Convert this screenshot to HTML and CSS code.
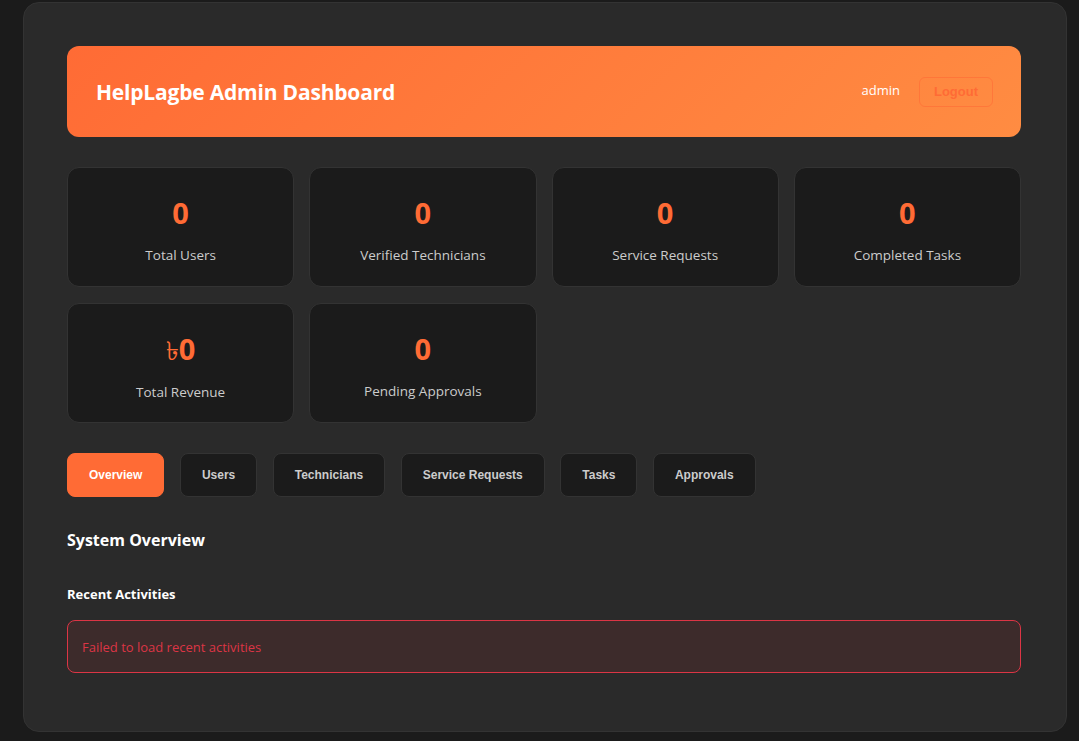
FILE: index.html
```html
<!DOCTYPE html>
<html lang="en">
<head>
<meta charset="utf-8">
<title>HelpLagbe Admin Dashboard</title>
<link rel="stylesheet" href="styles.css">
</head>
<body>
<div class="container">
  <header class="header">
    <h1 class="title">HelpLagbe Admin Dashboard</h1>
    <div class="user-area">
      <span class="user-name">admin</span>
      <button class="logout">Logout</button>
    </div>
  </header>

  <section class="stats">
    <div class="stat-card"><div class="stat-num">0</div><div class="stat-label">Total Users</div></div>
    <div class="stat-card"><div class="stat-num">0</div><div class="stat-label">Verified Technicians</div></div>
    <div class="stat-card"><div class="stat-num">0</div><div class="stat-label">Service Requests</div></div>
    <div class="stat-card"><div class="stat-num">0</div><div class="stat-label">Completed Tasks</div></div>
    <div class="stat-card"><div class="stat-num"><span class="taka">৳</span>0</div><div class="stat-label">Total Revenue</div></div>
    <div class="stat-card"><div class="stat-num">0</div><div class="stat-label">Pending Approvals</div></div>
  </section>

  <nav class="tabs">
    <button class="tab active">Overview</button>
    <button class="tab">Users</button>
    <button class="tab">Technicians</button>
    <button class="tab">Service Requests</button>
    <button class="tab">Tasks</button>
    <button class="tab">Approvals</button>
  </nav>

  <section class="overview">
    <h2 class="section-title">System Overview</h2>
    <h3 class="sub-title">Recent Activities</h3>
    <div class="error-box">Failed to load recent activities</div>
  </section>
</div>
</body>
</html>
```

FILE: styles.css
```css
html, body {
  margin: 0;
  background: #1b1b1b;
}
body {
  padding: 2px 12px 10px 23px;
  font-family: "Open Sans", "Noto Sans", sans-serif;
  color: #ffffff;
}
.container {
  box-sizing: border-box;
  width: 1044px;
  background: #2a2a2a;
  border: 1px solid #333333;
  border-radius: 16px;
  padding: 43px 45px 58px 43px;
}
.header {
  height: 91px;
  box-sizing: border-box;
  border-radius: 12px;
  background: linear-gradient(135deg, #ff6b35 0%, #ff8c42 100%);
  display: flex;
  align-items: center;
  justify-content: space-between;
  padding: 0 28px 0 29px;
}
.title {
  margin: 0;
  font-size: 21px;
  font-weight: 700;
  letter-spacing: -0.2px;
  color: #ffffff;
}
.user-area {
  display: flex;
  align-items: center;
  gap: 19px;
}
.user-name {
  font-size: 13px;
  color: #ffffff;
  position: relative;
  top: -2px;
}
.logout {
  height: 30px;
  width: 74px;
  box-sizing: border-box;
  background: transparent;
  border: 1px solid rgba(255, 107, 53, 0.6);
  border-radius: 6px;
  color: #ff6b35;
  font-family: "Liberation Sans", Arial, sans-serif;
  font-weight: 700;
  font-size: 13px;
  padding: 0;
}
.stats {
  margin-top: 30px;
  display: grid;
  grid-template-columns: repeat(4, 1fr);
  gap: 16px 15px;
}
.stat-card {
  height: 120px;
  box-sizing: border-box;
  background: #1b1b1b;
  border: 1px solid #333333;
  border-radius: 12px;
  display: flex;
  flex-direction: column;
  align-items: center;
  padding-top: 27px;
}
.stat-num {
  font-size: 29px;
  font-weight: 700;
  color: #ff6b35;
  line-height: 36px;
}
.taka {
  font-weight: 400;
  font-size: 26px;
}
.stat-label {
  margin-top: 15px;
  font-size: 13.5px;
  color: #cccccc;
}
.tabs {
  margin-top: 30px;
  display: flex;
  gap: 15.5px;
}
.tab {
  height: 44px;
  box-sizing: border-box;
  padding: 0 21px;
  background: #1b1b1b;
  border: 1px solid #333333;
  border-radius: 8px;
  color: #cccccc;
  font-family: "Liberation Sans", Arial, sans-serif;
  font-weight: 700;
  font-size: 12px;
}
.tab.active {
  background: #ff6b35;
  border-color: #ff6b35;
  color: #ffffff;
}
.overview {
  margin-top: 31px;
}
.section-title {
  margin: 0;
  font-size: 16px;
  font-weight: 700;
  line-height: 24px;
}
.sub-title {
  margin: 33px 0 0 0;
  font-size: 13px;
  font-weight: 700;
  line-height: 18px;
}
.error-box {
  margin-top: 17px;
  height: 53px;
  box-sizing: border-box;
  background: #3d2b2b;
  border: 1px solid #dc3545;
  border-radius: 8px;
  color: #dc3545;
  font-size: 13px;
  display: flex;
  align-items: center;
  padding: 0 14px;
}
```
